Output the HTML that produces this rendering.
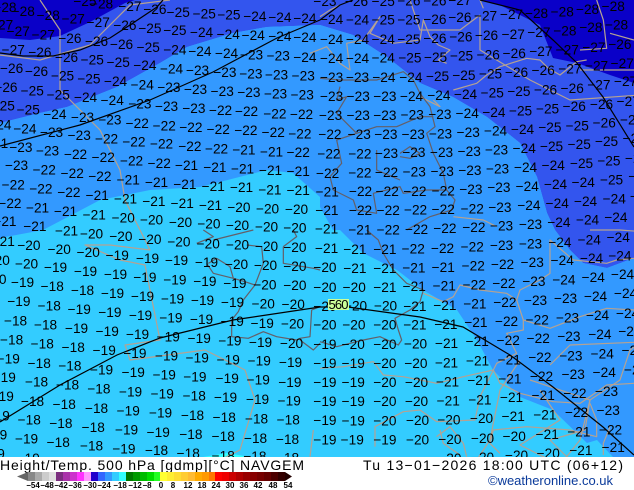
<!DOCTYPE html>
<html><head><meta charset="utf-8"><style>
html,body{margin:0;padding:0;background:#fff;width:634px;height:490px;overflow:hidden}
svg{display:block;overflow:hidden}
.l text{font:41px "Liberation Sans",sans-serif;fill:#000}
.c{fill:none;stroke:#b5a292;stroke-width:3.6;stroke-linejoin:round}
.d{fill:none;stroke:#655f68;stroke-width:3.6;stroke-linejoin:round}
.b{fill:none;stroke:#000;stroke-width:1.2}
.t text{font:bold 8px "Liberation Sans",sans-serif;fill:#000;text-anchor:middle}
</style></head><body>
<svg width="634" height="490" viewBox="0 0 634 490" xmlns="http://www.w3.org/2000/svg">
<rect width="634" height="457" fill="#33ccff"/>
<path d="M0 0H634V258L607 268 583 263 570 250 555 230 547 213 537 177 520 143 487 117 453 97 420 83 387 57 353 35 320 25 267 27 233 33 187 47 160 63 117 87 67 107 40 113 0 123Z" fill="#3355ee"/>
<path d="M0 123L40 113 67 107 117 87 160 63 187 47 233 33 267 27 320 25 353 35 387 57 420 83 453 97 487 117 520 143 537 177 547 213 555 230 570 250 583 263 607 268 634 258V457H613L597 440 587 443 553 410 520 397 493 370 477 340 457 310 423 290 397 270 363 253 340 230 333 230 320 207 320 197 293 173 267 170 200 187 150 190 100 200 43 230 0 238Z" fill="#3399ff"/>
<path d="M0 0H135L125 3 90 22 60 36 30 40 0 38Z" fill="#0a00c8"/>
<path d="M480 0H634V83L610 75 577 63 553 58 540 25 500 5Z" fill="#0a00c8"/>
<path d="M203 457L227 453 250 457Z" fill="#33ffff"/>

<g transform="scale(.33333)">
<g class="c">
<path d="M120 0L180 90 180 270 300 390 360 510 375 600 450 750 330 735 255 735 360 780 435 795 450 870 480 1020 375 1035 390 1080 615 1050 735 1110 765 1200 720 1350 630 1395 525 1470 390 1530 495 1575 615 1590 585 1710 615 1860 555 2055"/>
<path d="M0 1725L180 1710 360 1725 615 1725 870 1740 1020 1680 1260 1650 1350 1695"/>
<path d="M1320 1470L1410 1410 1470 1320 1500 1170 1560 1080M1590 1140L1770 1200 1740 1320 1680 1395 1560 1335 1680 1260 1620 1170M1650 1095L1710 1035 2070 1020 2130 960 2340 945 2400 990 2370 1035 2430 1005"/>
<path d="M1230 1560L1290 1590 1350 1650M1260 1620L1320 1530"/>
<path d="M2430 0V150L2460 240 2415 330 2490 450 2460 525 2550 570 2445 585 2490 690 2505 840 2670 930"/>
<path d="M2760 120L2790 300 2850 210 2880 330 2760 390 2820 540 2880 620 2790 690M2880 0L2820 90M2700 480L2880 510 2760 560"/>
<path d="M2880 150L2970 190 2990 60 3100 140 3300 180 3180 270M3090 350L3200 370 3130 450 3060 540 3180 630M3300 400L3360 620"/>
<path d="M1440 45L1380 90 1260 90 1230 0"/>
<path d="M1440 45V150L1590 240 1710 300 1920 285"/>
<path d="M0 165L120 180 270 135 390 15 510 0"/>
<path d="M2085 975L1980 990 1890 1050 1860 1140 1770 1200 1755 1290 1650 1320 1710 1380 1605 1425 1800 1440 1845 1530 1920 1545 2100 1515 2250 1410 2310 1365 2430 1440 2445 1575 2490 1560 2520 1380 2730 1320 2715 1200 2880 1230"/>
<path d="M1845 1530L1920 1710 1770 1800 1860 1890 1800 2055"/>
</g>
<g class="d">
<path d="M2100 1020L2145 1185 2070 1290 1980 1305 2070 1410 2040 1530 1800 1560 1830 1710 1740 1800 1755 1890 1830 2040"/>
<path d="M2160 1380L2280 1470 2490 1410 2580 1350M2660 1380L2700 1530 2800 1620 2760 1700 2700 1800 2760 1950 2880 2050"/>
</g>
<path class="c" d="M1770 690L1860 690 1990 700 1990 600"/>
</g>

<g transform="translate(320) scale(.33333)">
<g class="c">
<path d="M0 50L30 30 60 15M-30 160L20 140 60 190 90 210 80 130 130 120 180 50 150 100 220 130 300 120 310 60 330 110 355 135 390 150 355 180 380 190"/>
<path d="M400 270L470 250 500 225 540 200 620 175 660 180 685 205 720 225 770 185 800 180M780 150L860 145 850 60 830 0M870 100L942 120M780 210H942M480 0L490 25"/>
<path d="M300 290L360 320 340 300"/>
</g>
<g class="d">
<path d="M0 235L60 240 170 240 250 215 280 240 300 280 330 320 345 380 320 400 340 460 370 520 380 570 405 600 395 630 330 650 260 690"/>
<path d="M60 260L50 300 80 290 50 340 110 400 50 420 65 490 30 530 40 570 100 600 110 630 170 640 160 580 240 560 250 580 320 570 380 570"/>
<path d="M110 400L170 380 230 380 300 350 340 350M170 450V510L240 540M240 460L270 440 300 460 270 475 240 470"/>
</g>
<path class="c" d="M400 650L490 660 530 680"/>
</g>

<g transform="translate(0,230) scale(.33333)">
<g class="d">
<path d="M590 40L640 20 610 0M640 30L760 0"/>
<path d="M620 100L640 130 700 145 690 110 650 85 625 100"/>
<path d="M700 145L735 155 765 165 730 210 715 245 695 270V320L745 325 790 305 830 320 890 330 900 325 930 320 935 240 960 230"/>
<path d="M765 165L790 100 785 50 740 45M850 50V100L940 115 960 120M900 330L940 360 960 340M850 50L890 20 880 0"/>
</g>
</g>

<g transform="translate(320,230) scale(.33333)">
<g class="d">
<path d="M140 0L175 30 190 70 220 120 260 160 310 180 300 215 270 240 225 265 235 300 245 330 235 345 180 320 130 330 50 350 0 335"/>
</g>
<g class="c">
<path d="M310 190L370 215 400 200 420 165 480 180 560 190 590 210 600 180 660 150 690 130 690 30 760 90 860 100 890 90 942 85"/>
<path d="M590 210L610 270 690 295 780 260 860 235 942 240"/>
<path d="M610 270V300L560 310 590 370 530 400 520 420 430 440 350 460 250 440 190 435 160 395 70 410 0 415"/>
<path d="M520 420L540 460 600 490 700 515 780 520 810 500 860 465 942 460"/>
<path d="M520 420L480 500 465 570 350 575 300 540 250 545 165 590V650"/>
<path d="M810 520L830 570V620L750 600 620 590 520 600 510 640 540 670"/>
<path d="M870 590L850 640V675M360 600L370 640 420 675M350 620L390 590 430 640 440 680M-20 600L-30 680"/>
</g>
</g>

<path class="b" d="M0 53L23 56 53 56 80 50 110 38 133 23 157 7 163 0"/>
<path class="b" d="M0 146L80 125 150 100 213 72 277 38 320 20 340 5 353 0"/>
<path class="b" d="M480 0L520 10 553 40 577 63 603 97 634 147"/>
<path class="b" d="M0 422L60 385 117 355 160 338 233 320 320 307 348 307 420 317 463 327 510 355 553 387 603 427 634 455"/>

<g class="l" transform="translate(0,4.5) scale(.33333)">
<text x="-20" y="22">−28</text><text x="220" y="5">−25</text><text x="270" y="12">−28</text><text x="355" y="20">−27</text><text x="430" y="28">−26</text><text x="500" y="37">−25</text><text x="578" y="42">−25</text><text x="652" y="45">−25</text><text x="730" y="50">−24</text><text x="805" y="53">−24</text><text x="880" y="55">−24</text>
<text x="35" y="35">−28</text><text x="110" y="47">−28</text><text x="185" y="57">−27</text><text x="260" y="67">−27</text><text x="340" y="77">−26</text><text x="415" y="85">−25</text><text x="490" y="92">−25</text><text x="570" y="98">−24</text><text x="650" y="103">−24</text><text x="725" y="107">−24</text><text x="805" y="110">−24</text><text x="880" y="113">−24</text>
<text x="-30" y="75">−27</text><text x="20" y="95">−27</text><text x="95" y="105">−27</text><text x="175" y="115">−26</text><text x="255" y="125">−26</text><text x="330" y="133">−26</text><text x="410" y="142">−25</text><text x="490" y="150">−24</text><text x="565" y="155">−24</text><text x="645" y="160">−24</text><text x="720" y="165">−23</text><text x="800" y="168">−23</text><text x="880" y="172">−24</text>
<text x="5" y="150">−27</text><text x="85" y="158">−26</text><text x="165" y="172">−26</text><text x="242" y="180">−25</text><text x="320" y="188">−25</text><text x="400" y="197">−24</text><text x="480" y="207">−24</text><text x="558" y="212">−23</text><text x="640" y="218">−23</text><text x="718" y="222">−23</text><text x="795" y="225">−23</text><text x="875" y="228">−23</text>
<text x="0" y="205">−26</text><text x="75" y="215">−26</text><text x="153" y="228">−25</text><text x="232" y="237">−25</text><text x="312" y="245">−24</text><text x="392" y="255">−24</text><text x="472" y="263">−23</text><text x="552" y="268">−23</text><text x="632" y="275">−23</text><text x="712" y="278">−23</text><text x="792" y="282">−23</text><text x="872" y="285">−23</text>
<text x="-17" y="262">−26</text><text x="62" y="273">−25</text><text x="140" y="285">−25</text><text x="222" y="293">−24</text><text x="302" y="302">−24</text><text x="385" y="312">−23</text><text x="465" y="320">−23</text><text x="547" y="326">−23</text><text x="627" y="332">−22</text><text x="705" y="335">−22</text><text x="790" y="342">−22</text><text x="870" y="343">−22</text>
<text x="-25" y="318">−25</text><text x="50" y="330">−25</text><text x="130" y="343">−24</text><text x="213" y="352">−23</text><text x="295" y="360">−23</text><text x="377" y="370">−22</text><text x="458" y="378">−22</text><text x="538" y="383">−22</text><text x="620" y="388">−22</text><text x="703" y="392">−22</text><text x="785" y="398">−22</text><text x="865" y="402">−22</text>
<text x="-35" y="375">−24</text><text x="40" y="387">−24</text><text x="120" y="397">−23</text><text x="203" y="407">−23</text><text x="285" y="417">−22</text><text x="367" y="426">−22</text><text x="450" y="432">−22</text><text x="535" y="440">−22</text><text x="615" y="447">−22</text><text x="697" y="450">−21</text><text x="780" y="456">−21</text><text x="860" y="458">−22</text>
<text x="-45" y="430">−21</text><text x="28" y="442">−23</text><text x="108" y="453">−23</text><text x="192" y="464">−22</text><text x="275" y="473">−22</text><text x="360" y="483">−22</text><text x="443" y="490">−22</text><text x="525" y="496">−21</text><text x="610" y="503">−21</text><text x="693" y="507">−21</text><text x="777" y="512">−21</text><text x="860" y="515">−21</text>
<text x="15" y="497">−23</text><text x="98" y="510">−22</text><text x="182" y="520">−22</text><text x="265" y="530">−22</text><text x="350" y="540">−21</text><text x="435" y="547">−21</text><text x="520" y="553">−21</text><text x="605" y="560">−21</text><text x="690" y="563">−21</text><text x="775" y="570">−21</text><text x="860" y="572">−21</text>
<text x="5" y="555">−22</text><text x="88" y="567">−22</text><text x="172" y="577">−22</text><text x="257" y="587">−21</text><text x="342" y="597">−21</text><text x="427" y="604">−21</text><text x="512" y="610">−21</text><text x="597" y="617">−21</text><text x="682" y="622">−20</text><text x="768" y="627">−20</text><text x="855" y="628">−20</text>
<text x="-5" y="610">−22</text><text x="78" y="624">−21</text><text x="162" y="635">−21</text><text x="248" y="645">−21</text><text x="335" y="654">−20</text><text x="420" y="660">−20</text><text x="507" y="667">−20</text><text x="592" y="672">−20</text><text x="678" y="677">−20</text><text x="765" y="681">−20</text><text x="850" y="684">−20</text>
<text x="-20" y="665">−21</text><text x="70" y="680">−21</text>
</g>

<g class="l" transform="translate(320,4.5) scale(.33333)">
<text x="-20" y="5">−23</text><text x="75" y="5">−26</text><text x="155" y="5">−25</text><text x="232" y="3">−26</text><text x="310" y="3">−26</text><text x="385" y="2">−27</text>
<text x="0" y="58">−24</text><text x="78" y="60">−24</text><text x="155" y="60">−25</text><text x="232" y="60">−25</text><text x="310" y="58">−26</text><text x="385" y="53">−26</text><text x="462" y="48">−27</text><text x="540" y="44">−27</text><text x="615" y="41">−28</text><text x="692" y="36">−28</text><text x="768" y="28">−28</text><text x="845" y="20">−28</text>
<text x="0" y="118">−24</text><text x="78" y="118">−24</text><text x="155" y="118">−24</text><text x="232" y="118">−25</text><text x="310" y="115">−26</text><text x="388" y="111">−26</text><text x="465" y="107">−26</text><text x="545" y="103">−27</text><text x="622" y="98">−27</text><text x="700" y="93">−28</text><text x="778" y="83">−28</text><text x="855" y="75">−28</text>
<text x="0" y="175">−24</text><text x="78" y="175">−24</text><text x="155" y="174">−24</text><text x="235" y="174">−25</text><text x="312" y="172">−25</text><text x="390" y="168">−25</text><text x="470" y="165">−26</text><text x="548" y="160">−26</text><text x="628" y="155">−27</text><text x="707" y="150">−27</text><text x="787" y="142">−27</text><text x="865" y="133">−26</text>
<text x="0" y="232">−23</text><text x="78" y="232">−23</text><text x="157" y="232">−24</text><text x="238" y="232">−24</text><text x="318" y="229">−25</text><text x="397" y="226">−25</text><text x="477" y="222">−25</text><text x="555" y="217">−26</text><text x="635" y="212">−26</text><text x="715" y="207">−27</text><text x="795" y="198">−27</text><text x="872" y="190">−27</text>
<text x="0" y="290">−23</text><text x="80" y="290">−23</text><text x="160" y="290">−23</text><text x="240" y="290">−24</text><text x="322" y="287">−24</text><text x="402" y="283">−24</text><text x="482" y="279">−25</text><text x="562" y="275">−25</text><text x="642" y="270">−26</text><text x="722" y="265">−26</text><text x="802" y="255">−27</text><text x="882" y="245">−27</text>
<text x="-3" y="347">−23</text><text x="80" y="347">−23</text><text x="160" y="347">−23</text><text x="242" y="345">−23</text><text x="325" y="343">−23</text><text x="407" y="341">−24</text><text x="487" y="337">−24</text><text x="567" y="333">−25</text><text x="648" y="327">−25</text><text x="728" y="320">−26</text><text x="810" y="313">−26</text><text x="890" y="305">−27</text>
<text x="-5" y="404">−22</text><text x="83" y="403">−23</text><text x="163" y="403">−23</text><text x="245" y="403">−23</text><text x="327" y="402">−23</text><text x="410" y="398">−23</text><text x="492" y="393">−24</text><text x="573" y="388">−24</text><text x="655" y="383">−25</text><text x="737" y="378">−25</text><text x="818" y="369">−26</text><text x="900" y="360">−26</text>
<text x="-8" y="462">−22</text><text x="85" y="462">−22</text><text x="165" y="460">−23</text><text x="247" y="458">−23</text><text x="330" y="457">−23</text><text x="413" y="454">−23</text><text x="495" y="450">−23</text><text x="578" y="445">−24</text><text x="660" y="440">−25</text><text x="743" y="434">−25</text><text x="825" y="425">−25</text><text x="908" y="415">−25</text>
<text x="-12" y="520">−22</text><text x="85" y="519">−22</text><text x="165" y="518">−22</text><text x="248" y="516">−23</text><text x="332" y="514">−23</text><text x="415" y="512">−23</text><text x="498" y="507">−23</text><text x="582" y="503">−24</text><text x="665" y="497">−24</text><text x="750" y="490">−25</text><text x="832" y="483">−25</text><text x="915" y="475">−25</text>
<text x="-13" y="576">−21</text><text x="87" y="575">−22</text><text x="167" y="575">−22</text><text x="250" y="574">−22</text><text x="335" y="573">−22</text><text x="418" y="568">−23</text><text x="502" y="563">−23</text><text x="587" y="560">−24</text><text x="672" y="553">−24</text><text x="755" y="547">−24</text><text x="840" y="540">−25</text><text x="925" y="530">−25</text>
<text x="-14" y="632">−21</text><text x="87" y="632">−22</text><text x="170" y="632">−22</text><text x="252" y="630">−22</text><text x="335" y="628">−22</text><text x="422" y="627">−22</text><text x="505" y="622">−23</text><text x="592" y="617">−24</text><text x="677" y="610">−24</text><text x="762" y="604">−24</text><text x="848" y="597">−24</text><text x="930" y="590">−24</text>
<text x="-15" y="687">−21</text><text x="85" y="690">−21</text><text x="170" y="690">−22</text><text x="255" y="688">−22</text><text x="340" y="685">−22</text><text x="427" y="683">−22</text><text x="510" y="678">−23</text><text x="597" y="673">−23</text><text x="682" y="667">−24</text><text x="768" y="660">−24</text><text x="853" y="653">−24</text>
</g>

<g class="l" transform="translate(0,234.5) scale(.33333)">
<text x="165" y="3">−21</text><text x="240" y="12">−20</text><text x="328" y="20">−20</text><text x="415" y="28">−20</text><text x="502" y="36">−20</text><text x="590" y="42">−20</text><text x="678" y="45">−20</text><text x="765" y="50">−20</text><text x="850" y="53">−20</text>
<text x="-25" y="35">−21</text><text x="52" y="47">−20</text><text x="143" y="58">−20</text><text x="230" y="68">−20</text><text x="317" y="77">−19</text><text x="408" y="86">−19</text><text x="495" y="92">−19</text><text x="585" y="98">−19</text><text x="675" y="103">−20</text><text x="762" y="107">−20</text><text x="850" y="110">−20</text>
<text x="-40" y="92">−20</text><text x="45" y="102">−20</text><text x="132" y="113">−19</text><text x="222" y="125">−19</text><text x="312" y="133">−19</text><text x="400" y="142">−19</text><text x="490" y="150">−19</text><text x="580" y="155">−19</text><text x="670" y="160">−19</text><text x="760" y="165">−20</text><text x="850" y="167">−20</text>
<text x="-50" y="148">−20</text><text x="33" y="158">−19</text><text x="122" y="170">−18</text><text x="213" y="181">−18</text><text x="303" y="191">−19</text><text x="393" y="200">−19</text><text x="483" y="207">−19</text><text x="573" y="212">−19</text><text x="663" y="218">−19</text><text x="755" y="222">−20</text><text x="845" y="224">−20</text>
<text x="22" y="215">−19</text><text x="113" y="228">−18</text><text x="203" y="238">−19</text><text x="295" y="248">−19</text><text x="387" y="257">−19</text><text x="478" y="264">−19</text><text x="570" y="269">−19</text><text x="662" y="275">−19</text><text x="752" y="280">−19</text><text x="843" y="282">−20</text>
<text x="12" y="273">−18</text><text x="102" y="285">−18</text><text x="195" y="295">−19</text><text x="287" y="305">−19</text><text x="378" y="314">−19</text><text x="470" y="321">−19</text><text x="563" y="326">−19</text><text x="655" y="333">−19</text><text x="747" y="337">−19</text><text x="840" y="340">−20</text>
<text x="0" y="330">−18</text><text x="92" y="342">−18</text><text x="185" y="352">−18</text><text x="278" y="362">−19</text><text x="370" y="371">−19</text><text x="465" y="378">−19</text><text x="557" y="384">−19</text><text x="650" y="390">−19</text><text x="743" y="393">−19</text><text x="837" y="397">−19</text>
<text x="-10" y="387">−19</text><text x="83" y="400">−18</text><text x="175" y="408">−18</text><text x="270" y="420">−19</text><text x="365" y="428">−19</text><text x="458" y="435">−19</text><text x="550" y="441">−19</text><text x="647" y="446">−19</text><text x="740" y="450">−19</text><text x="835" y="457">−19</text>
<text x="-22" y="443">−19</text><text x="75" y="456">−18</text><text x="168" y="465">−18</text><text x="262" y="477">−18</text><text x="357" y="486">−19</text><text x="452" y="492">−19</text><text x="548" y="498">−18</text><text x="642" y="503">−19</text><text x="738" y="509">−19</text><text x="833" y="513">−19</text>
<text x="-28" y="500">−19</text><text x="63" y="514">−18</text><text x="158" y="523">−18</text><text x="255" y="535">−18</text><text x="350" y="543">−19</text><text x="447" y="549">−19</text><text x="543" y="556">−18</text><text x="638" y="562">−18</text><text x="735" y="567">−18</text><text x="830" y="570">−18</text>
<text x="-40" y="558">−19</text><text x="53" y="570">−18</text><text x="148" y="580">−18</text><text x="245" y="592">−18</text><text x="345" y="600">−19</text><text x="440" y="607">−19</text><text x="538" y="613">−18</text><text x="635" y="620">−18</text><text x="732" y="625">−18</text><text x="828" y="628">−18</text>
<text x="-48" y="615">−19</text><text x="45" y="627">−19</text><text x="140" y="638">−18</text><text x="240" y="648">−18</text><text x="337" y="657">−19</text><text x="435" y="662">−18</text><text x="530" y="670">−18</text><text x="635" y="678">−18</text><text x="730" y="680">−18</text><text x="828" y="684">−18</text>
<text x="-55" y="672">−19</text><text x="50" y="685">−19</text>
</g>

<g class="l" transform="translate(320,234.5) scale(.33333)">
<text x="-15" y="55">−21</text><text x="70" y="58">−21</text><text x="160" y="58">−21</text><text x="245" y="57">−22</text><text x="333" y="55">−22</text><text x="422" y="51">−22</text><text x="510" y="46">−23</text><text x="597" y="42">−23</text><text x="685" y="37">−24</text><text x="773" y="30">−24</text><text x="860" y="22">−24</text>
<text x="-20" y="113">−20</text><text x="70" y="115">−21</text><text x="160" y="115">−21</text><text x="247" y="114">−21</text><text x="335" y="112">−21</text><text x="425" y="108">−22</text><text x="513" y="103">−22</text><text x="602" y="98">−23</text><text x="692" y="92">−24</text><text x="780" y="85">−24</text><text x="865" y="78">−24</text>
<text x="-20" y="172">−20</text><text x="68" y="172">−20</text><text x="160" y="172">−21</text><text x="248" y="170">−21</text><text x="338" y="168">−21</text><text x="428" y="165">−22</text><text x="517" y="160">−22</text><text x="607" y="155">−23</text><text x="697" y="150">−24</text><text x="785" y="142">−24</text><text x="873" y="133">−24</text>
<text x="-20" y="230">−20</text><text x="72" y="228">−20</text><text x="162" y="228">−20</text><text x="250" y="229">−21</text><text x="340" y="226">−21</text><text x="430" y="222">−21</text><text x="520" y="218">−22</text><text x="612" y="212">−23</text><text x="702" y="206">−23</text><text x="792" y="200">−24</text><text x="882" y="190">−24</text>
<text x="-20" y="285">−20</text><text x="67" y="285">−20</text><text x="160" y="285">−20</text><text x="250" y="285">−21</text><text x="343" y="283">−21</text><text x="433" y="278">−21</text><text x="525" y="275">−22</text><text x="617" y="270">−22</text><text x="708" y="264">−23</text><text x="798" y="257">−24</text><text x="888" y="250">−24</text>
<text x="-20" y="343">−19</text><text x="65" y="343">−20</text><text x="160" y="343">−20</text><text x="252" y="342">−20</text><text x="345" y="340">−21</text><text x="437" y="335">−21</text><text x="530" y="332">−22</text><text x="620" y="326">−22</text><text x="712" y="320">−23</text><text x="805" y="314">−24</text><text x="895" y="305">−24</text>
<text x="-20" y="400">−19</text><text x="65" y="400">−19</text><text x="160" y="400">−20</text><text x="253" y="400">−20</text><text x="345" y="399">−21</text><text x="438" y="393">−21</text><text x="533" y="390">−21</text><text x="625" y="383">−22</text><text x="718" y="378">−23</text><text x="812" y="372">−24</text><text x="905" y="362">−24</text>
<text x="-20" y="457">−19</text><text x="65" y="458">−19</text><text x="160" y="458">−20</text><text x="255" y="457">−20</text><text x="348" y="456">−21</text><text x="442" y="452">−21</text><text x="535" y="447">−21</text><text x="630" y="440">−22</text><text x="725" y="434">−23</text><text x="818" y="428">−24</text><text x="912" y="420">−24</text>
<text x="-20" y="514">−19</text><text x="65" y="515">−19</text><text x="160" y="515">−20</text><text x="255" y="515">−20</text><text x="350" y="513">−21</text><text x="445" y="510">−21</text><text x="540" y="503">−21</text><text x="635" y="497">−21</text><text x="730" y="491">−22</text><text x="825" y="485">−23</text>
<text x="-20" y="572">−19</text><text x="65" y="573">−19</text><text x="160" y="573">−20</text><text x="258" y="572">−20</text><text x="352" y="570">−20</text><text x="450" y="566">−20</text><text x="545" y="560">−21</text><text x="640" y="555">−21</text><text x="735" y="548">−22</text><text x="830" y="542">−23</text>
<text x="-20" y="630">−19</text><text x="62" y="630">−19</text><text x="160" y="630">−19</text><text x="258" y="630">−20</text><text x="355" y="628">−20</text><text x="453" y="625">−20</text><text x="548" y="620">−20</text><text x="647" y="614">−21</text><text x="742" y="606">−21</text><text x="837" y="600">−22</text>
<text x="355" y="685">−20</text><text x="453" y="682">−20</text><text x="555" y="676">−20</text><text x="650" y="670">−20</text><text x="748" y="662">−21</text><text x="845" y="652">−21</text>
</g>

<rect x="328" y="299" width="21" height="11" fill="#ccff99"/>
<text x="328.5" y="309" font-family="Liberation Sans,sans-serif" font-size="13" textLength="20" fill="#000">560</text>

<rect y="457" width="634" height="33" fill="#fff"/>
<text x="0" y="470" font-family="Liberation Sans,sans-serif" font-size="14" textLength="304" fill="#000">Height/Temp. 500 hPa [gdmp][°C] NAVGEM</text>
<text x="363" y="470" font-family="Liberation Sans,sans-serif" font-size="14" textLength="260" fill="#000">Tu 13−01−2026 18:00 UTC (06+12)</text>
<text x="488" y="485" font-family="Liberation Sans,sans-serif" font-size="13" textLength="125" fill="#0a3a9a">©weatheronline.co.uk</text>

<path d="M17 476.5L28 472V481Z" fill="#666"/>
<g>
<rect x="28" y="472" width="7" height="9" fill="#888"/><rect x="35" y="472" width="7" height="9" fill="#aaa"/><rect x="42" y="472" width="7" height="9" fill="#ccc"/><rect x="49" y="472" width="7" height="9" fill="#e0e0e0"/>
<rect x="56" y="472" width="7" height="9" fill="#7b2f7f"/><rect x="63" y="472" width="7" height="9" fill="#aa33aa"/><rect x="70" y="472" width="7" height="9" fill="#cc33cc"/><rect x="77" y="472" width="7" height="9" fill="#ff33ff"/><rect x="84" y="472" width="7" height="9" fill="#ff99ff"/>
<rect x="91" y="472" width="7" height="9" fill="#2200cc"/><rect x="98" y="472" width="7" height="9" fill="#3366ff"/><rect x="105" y="472" width="7" height="9" fill="#3399ff"/><rect x="112" y="472" width="7" height="9" fill="#33ccff"/><rect x="119" y="472" width="7" height="9" fill="#33ffff"/>
<rect x="126" y="472" width="7" height="9" fill="#007700"/><rect x="133" y="472" width="7" height="9" fill="#009900"/><rect x="140" y="472" width="7" height="9" fill="#00bb00"/><rect x="147" y="472" width="7" height="9" fill="#00dd00"/><rect x="154" y="472" width="6" height="9" fill="#22ff22"/>
<rect x="160" y="472" width="7" height="9" fill="#ffff33"/><rect x="167" y="472" width="7" height="9" fill="#ffee33"/><rect x="174" y="472" width="7" height="9" fill="#ffdd33"/><rect x="181" y="472" width="7" height="9" fill="#ffcc33"/><rect x="188" y="472" width="7" height="9" fill="#ffbb33"/><rect x="195" y="472" width="7" height="9" fill="#ffaa00"/><rect x="202" y="472" width="7" height="9" fill="#ff9900"/><rect x="209" y="472" width="6" height="9" fill="#ff7700"/>
<rect x="215" y="472" width="7" height="9" fill="#ff0000"/><rect x="222" y="472" width="7" height="9" fill="#ee0000"/><rect x="229" y="472" width="7" height="9" fill="#cc0000"/><rect x="236" y="472" width="7" height="9" fill="#b00000"/><rect x="243" y="472" width="7" height="9" fill="#990000"/><rect x="250" y="472" width="7" height="9" fill="#880000"/><rect x="257" y="472" width="7" height="9" fill="#770000"/><rect x="264" y="472" width="7" height="9" fill="#660000"/><rect x="271" y="472" width="7" height="9" fill="#4c0000"/><rect x="278" y="472" width="7" height="9" fill="#330000"/>
</g>
<path d="M285 472L292 476.5 285 481Z" fill="#220000"/>
<g class="t">
<text x="33" y="488.2">−54</text><text x="47" y="488.2">−48</text><text x="61" y="488.2">−42</text><text x="75" y="488.2">−36</text><text x="90" y="488.2">−30</text><text x="104" y="488.2">−24</text><text x="120" y="488.2">−18</text><text x="135" y="488.2">−12</text><text x="147" y="488.2">−8</text><text x="161" y="488.2">0</text><text x="173" y="488.2">8</text><text x="188" y="488.2">12</text><text x="202" y="488.2">18</text><text x="216" y="488.2">24</text><text x="230" y="488.2">30</text><text x="244" y="488.2">36</text><text x="258" y="488.2">42</text><text x="273" y="488.2">48</text><text x="288" y="488.2">54</text>
</g>
</svg>
</body></html>
